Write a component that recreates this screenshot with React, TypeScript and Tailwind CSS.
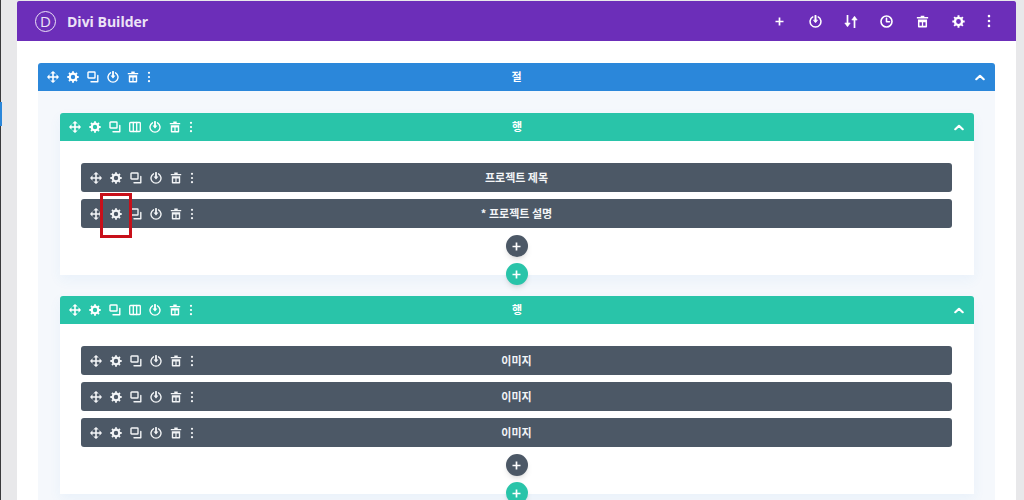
type IconProps = { size?: number };

const base = {
  fill: "none",
  stroke: "currentColor",
  strokeWidth: 1.8,
  strokeLinecap: "round" as const,
  strokeLinejoin: "round" as const,
};

function Move({ size = 12 }: IconProps) {
  return (
    <svg width={size} height={size} viewBox="0 0 12 12" fill="currentColor">
      <path d="M5.2 2.5h1.600v2.700h2.700V3.200L12 6 9.500 8.800V6.800H6.800v2.700h2L6 12 3.200 9.500h2V6.800H2.500v2L0 6l2.500-2.800v2h2.700V2.500h-2L6 0l2.800 2.500z" />
    </svg>
  );
}

function Gear({ size = 12 }: IconProps) {
  return (
    <svg width={size} height={size} viewBox="0 0 12 12">
      <circle cx="6" cy="6" r="3.300" fill="none" stroke="currentColor" strokeWidth="2.200" />
      <path
        stroke="currentColor"
        strokeWidth="1.800"
        d="M6 .3v2M6 9.700v2M.3 6h2M9.700 6h2M2 2l1.400 1.400M8.600 8.600 10 10M2 10l1.400-1.400M8.600 3.400 10 2"
      />
    </svg>
  );
}

function Clone({ size = 12 }: IconProps) {
  return (
    <svg width={size} height={size} viewBox="0 0 12 12" {...base} strokeWidth={1.4}>
      <rect x="1" y="1" width="7" height="6" rx="0.6" />
      <path d="M10.800 4.500v6.300H4" />
    </svg>
  );
}

function Columns({ size = 12 }: IconProps) {
  return (
    <svg width={size} height={size} viewBox="0 0 12 12" {...base} strokeWidth={1.3}>
      <rect x="0.700" y="1.500" width="10.600" height="9" rx="0.8" />
      <path d="M4.300 1.500v9M7.700 1.500v9" />
    </svg>
  );
}

function Power({ size = 12 }: IconProps) {
  return (
    <svg width={size} height={size} viewBox="0 0 12 12" {...base} strokeWidth={1.4}>
      <path d="M3.500 1.800a5 5 0 1 0 5 0" />
      <path d="M6 .8v4.700" strokeWidth={1.800} />
      <path d="M4.300 5 6 7.200 7.700 5z" fill="currentColor" strokeWidth={0.600} />
    </svg>
  );
}

function Trash({ size = 12 }: IconProps) {
  return (
    <svg width={size} height={size} viewBox="0 0 12 12" fill="currentColor">
      <path d="M4.300.6h3.400v1.300h3.500v1.300H.8V1.900h3.500z" />
      <path
        fillRule="evenodd"
        d="M1.800 4.200h8.400v6.500a.8.800 0 0 1-.8.800H2.600a.8.800 0 0 1-.8-.8zM3.200 6.600v3.300h2.200V6.600zm3.400 0v3.300h2.200V6.600z"
      />
    </svg>
  );
}

function Dots({ size = 12 }: IconProps) {
  return (
    <svg width={size} height={size} viewBox="0 0 12 12" fill="currentColor">
      <circle cx="6" cy="1.800" r="1.100" />
      <circle cx="6" cy="6" r="1.100" />
      <circle cx="6" cy="10.200" r="1.100" />
    </svg>
  );
}

function Chevron() {
  return (
    <svg width="10" height="7" viewBox="0 0 10 7" {...base} strokeWidth={2.200}>
      <path d="M1.300 5.200 5 1.800l3.700 3.400" />
    </svg>
  );
}

function Plus({ size = 9 }: IconProps) {
  return (
    <svg width={size} height={size} viewBox="0 0 9 9" {...base} strokeWidth={1.700} strokeLinecap="butt">
      <path d="M4.500.5v8M.5 4.500h8" />
    </svg>
  );
}

function Sort() {
  return (
    <svg width="14" height="13" viewBox="0 0 14 13" {...base} strokeWidth={1.700} strokeLinecap="butt">
      <path d="M3.500 0v9M10.500 4v9" />
      <path d="M.8 8h5.400L3.500 11.800zM7.800 5h5.400L10.500 1.200z" fill="currentColor" strokeWidth={0.600} />
    </svg>
  );
}

function Clock() {
  return (
    <svg width="13" height="13" viewBox="0 0 13 13" {...base} strokeWidth={1.600}>
      <circle cx="6.500" cy="6.500" r="5.500" />
      <path d="M6.500 3.300v3.400h3" />
    </svg>
  );
}

function Toolbar({ columns = false }: { columns?: boolean }) {
  const icons = columns
    ? [Move, Gear, Clone, Columns, Power, Trash]
    : [Move, Gear, Clone, Power, Trash];
  return (
    <div className="flex items-center pl-[5px]">
      {icons.map((Icon, i) => (
        <span key={i} className="flex w-[20px] justify-center">
          <Icon />
        </span>
      ))}
      <span className="flex w-[12px] justify-center">
        <Dots />
      </span>
    </div>
  );
}

function ModuleBar({ title }: { title: string }) {
  return (
    <div className="grid h-[29px] grid-cols-[1fr_auto_1fr] items-center rounded-[3px] bg-[#4c5866] text-[#f2f4f6]">
      <Toolbar />
      <span className="pb-[1px] text-[11px] font-bold">{title}</span>
      <span />
    </div>
  );
}

function AddButtons() {
  return (
    <div className="flex flex-col items-center">
      <button className="mt-[7px] flex h-[22px] w-[22px] items-center justify-center rounded-full bg-[#4c5866] text-white shadow-md">
        <Plus />
      </button>
      <button className="relative z-10 mt-[6px] -mb-[10px] flex h-[22px] w-[22px] items-center justify-center rounded-full bg-[#29c4a9] text-white shadow-md">
        <Plus />
      </button>
    </div>
  );
}

function Row({ modules }: { modules: string[] }) {
  return (
    <div className="shadow-[0_5px_12px_rgba(43,135,218,0.06)]">
      <div className="grid h-[28px] grid-cols-[1fr_auto_1fr] items-center rounded-t-[3px] bg-[#29c4a9] text-white">
        <Toolbar columns />
        <span className="pb-[1px] text-[11px] font-bold">행</span>
        <span className="flex justify-end pr-[10px]">
          <Chevron />
        </span>
      </div>
      <div className="bg-white pl-[21px] pr-[22px] pt-[22px]">
        <div className="flex flex-col gap-[7px]">
          {modules.map((m, i) => (
            <ModuleBar key={i} title={m} />
          ))}
        </div>
        <AddButtons />
      </div>
    </div>
  );
}

export default function App() {
  const tools = [Plus, Power, Sort, Clock, Trash, Gear];
  return (
    <div className="relative flex h-[500px] w-[1024px] overflow-hidden bg-[#e8e8ea] pl-[1px] pr-[8px] pt-[1px] font-['Noto_Sans_CJK_KR','Noto_Sans',sans-serif]">
      <div className="absolute left-0 top-0 h-full w-[1px] bg-[#3a3a3c]" />
      <div className="absolute left-0 top-[102px] h-[24px] w-[2px] bg-[#2b87da]" />
      <div className="ml-[16px] flex-1 bg-white">
        <div className="flex h-[40px] items-center justify-between rounded-t-[2px] bg-[#6c2eb9] text-[#ece3f6]">
          <div className="flex items-center pl-[18px] pt-[1px]">
            <span className="flex h-[21px] w-[21px] items-center justify-center rounded-full border-[1.5px] border-[#ece3f6] font-['Open_Sans',sans-serif] text-[15px] leading-none">
              D
            </span>
            <span className="ml-[11px] font-['Open_Sans',sans-serif] text-[14px] font-bold">
              Divi Builder
            </span>
          </div>
          <div className="flex items-center pr-[14px] text-white">
            {tools.map((Icon, i) => (
              <span key={i} className="flex w-[35.700px] justify-center">
                <Icon size={i === 0 ? 9 : 13} />
              </span>
            ))}
            <span className="flex w-[26px] justify-center">
              <Dots size={14} />
            </span>
          </div>
        </div>

        <div className="px-[21px] pt-[22px]">
          <div className="grid h-[28px] grid-cols-[1fr_auto_1fr] items-center rounded-t-[3px] bg-[#2b87da] text-white">
            <Toolbar />
            <span className="pb-[1px] text-[11px] font-bold">절</span>
            <span className="flex justify-end pr-[10px]">
              <Chevron />
            </span>
          </div>
          <div className="flex flex-col gap-[21px] bg-[#f5f8fc] pl-[22px] pr-[21px] pt-[22px] pb-[40px]">
            <Row modules={["프로젝트 제목", "* 프로젝트 설명"]} />
            <Row modules={["이미지", "이미지", "이미지"]} />
          </div>
        </div>
      </div>
      <div className="absolute left-[100px] top-[193px] h-[45px] w-[32px] border-[3px] border-[#c8101a]" />
    </div>
  );
}
